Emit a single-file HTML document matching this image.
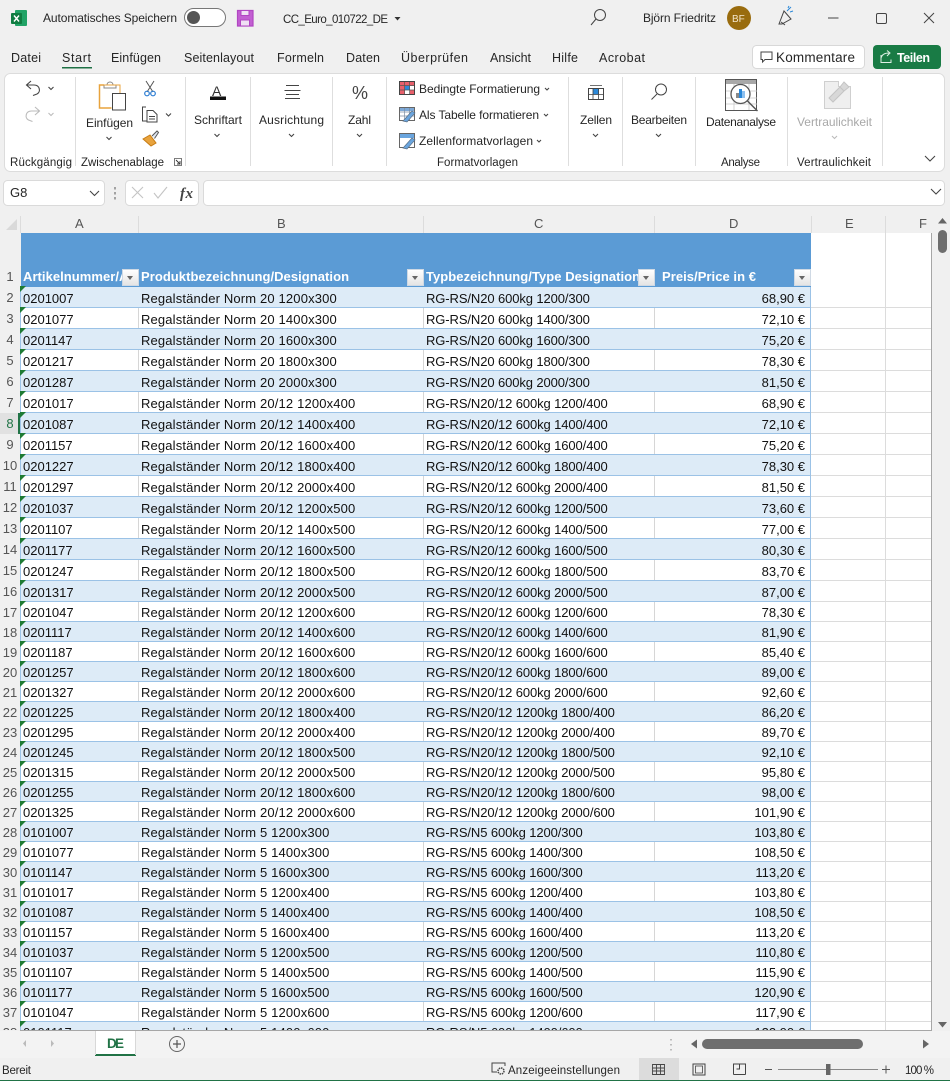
<!DOCTYPE html>
<html lang="de"><head><meta charset="utf-8"><title>CC_Euro_010722_DE</title>
<style>
html,body{margin:0;padding:0;width:950px;height:1081px;overflow:hidden;background:#f0f0f0;font-family:"Liberation Sans",sans-serif}
#g{position:absolute;left:0;top:0;width:931px;height:1030px;overflow:hidden}
#wh{position:absolute;left:21px;top:233px;width:910px;height:797px;background:#fff}
.r{position:absolute;left:0;width:931px;font-size:13px;color:#111;box-shadow:inset 0 -1px 0 #dcdcdc}
.r>em{position:absolute;left:0;top:0;bottom:0;width:20px;background:#f0f0f0;font-style:normal;text-align:center;color:#555;line-height:20px;padding-top:1px;box-sizing:border-box}
.t{position:absolute;left:20px;top:0;bottom:0;width:791px;box-shadow:inset 0 -1px 0 #9BC2E6,inset 1px 0 0 #9BC2E6,inset -1px 0 0 #9BC2E6}
.w{background:linear-gradient(#d6d6d6,#d6d6d6) 118px 0/1px 100% no-repeat,linear-gradient(#d6d6d6,#d6d6d6) 403px 0/1px 100% no-repeat,linear-gradient(#d6d6d6,#d6d6d6) 634px 0/1px 100% no-repeat,#fff}
.z{background:#DDEBF7}
.t span{position:absolute;bottom:-1px;line-height:20px;white-space:nowrap;letter-spacing:.1px}
.a{left:3px;letter-spacing:0!important}.b{left:121px;letter-spacing:.15px!important}.c{left:406px;letter-spacing:-.1px!important}.d{right:6px;letter-spacing:0!important}
.t i{position:absolute;left:0;top:-1px;width:0;height:0;border-top:6px solid #1E7B34;border-right:6px solid transparent}
#hd{position:absolute;left:21px;top:233px;width:790px;height:54px;background:#5B9BD5;color:#fff;font-weight:bold;font-size:13px}
#hd span{position:absolute;top:36px;line-height:16px;white-space:nowrap;letter-spacing:.05px;overflow:hidden}
#hd b{position:absolute;top:36px;width:15px;height:15px;background:linear-gradient(#fff,#e4e4e4);border:.5px solid #cfd9e4}
#hd b:after{content:"";position:absolute;left:4px;top:6px;border-top:4px solid #666;border-left:3.5px solid transparent;border-right:3.5px solid transparent}
#n1{position:absolute;left:0;top:233px;width:20px;height:54px;text-align:center;font-size:13px;color:#555;line-height:16px;padding-top:36px;box-sizing:border-box}
.vl{position:absolute;top:233px;height:797px;width:1px;background:#dcdcdc}
svg{position:absolute;left:0;top:0}
svg text{font-family:"Liberation Sans",sans-serif;fill:#262626;font-size:12px}
.g{fill:none;stroke:#444;stroke-width:1}
.ch{fill:none;stroke:#444;stroke-width:1.1}
</style></head><body>
<div id="g">
<div id="wh"></div>
<div class="vl" style="left:885px"></div>
<div id="n1">1</div>
<div id="hd"><span style="left:2px;width:99px">Artikelnummer/Article</span><b style="left:101px"></b><span style="left:120px">Produktbezeichnung/Designation</span><b style="left:386px"></b><span style="left:405px;width:212px">Typbezeichnung/Type Designation</span><b style="left:617px"></b><span style="left:641px">Preis/Price in €</span><b style="left:773px"></b></div>
<div class="r" style="top:287px;height:21px"><em>2</em><div class="t z"><i></i><span class="a">0201007</span><span class="b">Regalständer Norm 20 1200x300</span><span class="c">RG-RS/N20 600kg 1200/300</span><span class="d">68,90 €</span></div></div>
<div class="r" style="top:308px;height:21px"><em>3</em><div class="t w"><i></i><span class="a">0201077</span><span class="b">Regalständer Norm 20 1400x300</span><span class="c">RG-RS/N20 600kg 1400/300</span><span class="d">72,10 €</span></div></div>
<div class="r" style="top:329px;height:21px"><em>4</em><div class="t z"><i></i><span class="a">0201147</span><span class="b">Regalständer Norm 20 1600x300</span><span class="c">RG-RS/N20 600kg 1600/300</span><span class="d">75,20 €</span></div></div>
<div class="r" style="top:350px;height:21px"><em>5</em><div class="t w"><i></i><span class="a">0201217</span><span class="b">Regalständer Norm 20 1800x300</span><span class="c">RG-RS/N20 600kg 1800/300</span><span class="d">78,30 €</span></div></div>
<div class="r" style="top:371px;height:21px"><em>6</em><div class="t z"><i></i><span class="a">0201287</span><span class="b">Regalständer Norm 20 2000x300</span><span class="c">RG-RS/N20 600kg 2000/300</span><span class="d">81,50 €</span></div></div>
<div class="r" style="top:392px;height:21px"><em>7</em><div class="t w"><i></i><span class="a">0201017</span><span class="b">Regalständer Norm 20/12 1200x400</span><span class="c">RG-RS/N20/12 600kg 1200/400</span><span class="d">68,90 €</span></div></div>
<div class="r" style="top:413px;height:21px"><em style="background:#e1e1e1;color:#217346;box-shadow:inset -2px 0 0 #217346">8</em><div class="t z"><i></i><span class="a">0201087</span><span class="b">Regalständer Norm 20/12 1400x400</span><span class="c">RG-RS/N20/12 600kg 1400/400</span><span class="d">72,10 €</span></div></div>
<div class="r" style="top:434px;height:21px"><em>9</em><div class="t w"><i></i><span class="a">0201157</span><span class="b">Regalständer Norm 20/12 1600x400</span><span class="c">RG-RS/N20/12 600kg 1600/400</span><span class="d">75,20 €</span></div></div>
<div class="r" style="top:455px;height:21px"><em>10</em><div class="t z"><i></i><span class="a">0201227</span><span class="b">Regalständer Norm 20/12 1800x400</span><span class="c">RG-RS/N20/12 600kg 1800/400</span><span class="d">78,30 €</span></div></div>
<div class="r" style="top:476px;height:21px"><em>11</em><div class="t w"><i></i><span class="a">0201297</span><span class="b">Regalständer Norm 20/12 2000x400</span><span class="c">RG-RS/N20/12 600kg 2000/400</span><span class="d">81,50 €</span></div></div>
<div class="r" style="top:497px;height:21px"><em>12</em><div class="t z"><i></i><span class="a">0201037</span><span class="b">Regalständer Norm 20/12 1200x500</span><span class="c">RG-RS/N20/12 600kg 1200/500</span><span class="d">73,60 €</span></div></div>
<div class="r" style="top:518px;height:21px"><em>13</em><div class="t w"><i></i><span class="a">0201107</span><span class="b">Regalständer Norm 20/12 1400x500</span><span class="c">RG-RS/N20/12 600kg 1400/500</span><span class="d">77,00 €</span></div></div>
<div class="r" style="top:539px;height:21px"><em>14</em><div class="t z"><i></i><span class="a">0201177</span><span class="b">Regalständer Norm 20/12 1600x500</span><span class="c">RG-RS/N20/12 600kg 1600/500</span><span class="d">80,30 €</span></div></div>
<div class="r" style="top:560px;height:21px"><em>15</em><div class="t w"><i></i><span class="a">0201247</span><span class="b">Regalständer Norm 20/12 1800x500</span><span class="c">RG-RS/N20/12 600kg 1800/500</span><span class="d">83,70 €</span></div></div>
<div class="r" style="top:581px;height:21px"><em>16</em><div class="t z"><i></i><span class="a">0201317</span><span class="b">Regalständer Norm 20/12 2000x500</span><span class="c">RG-RS/N20/12 600kg 2000/500</span><span class="d">87,00 €</span></div></div>
<div class="r" style="top:602px;height:20px"><em>17</em><div class="t w"><i></i><span class="a">0201047</span><span class="b">Regalständer Norm 20/12 1200x600</span><span class="c">RG-RS/N20/12 600kg 1200/600</span><span class="d">78,30 €</span></div></div>
<div class="r" style="top:622px;height:20px"><em>18</em><div class="t z"><i></i><span class="a">0201117</span><span class="b">Regalständer Norm 20/12 1400x600</span><span class="c">RG-RS/N20/12 600kg 1400/600</span><span class="d">81,90 €</span></div></div>
<div class="r" style="top:642px;height:20px"><em>19</em><div class="t w"><i></i><span class="a">0201187</span><span class="b">Regalständer Norm 20/12 1600x600</span><span class="c">RG-RS/N20/12 600kg 1600/600</span><span class="d">85,40 €</span></div></div>
<div class="r" style="top:662px;height:20px"><em>20</em><div class="t z"><i></i><span class="a">0201257</span><span class="b">Regalständer Norm 20/12 1800x600</span><span class="c">RG-RS/N20/12 600kg 1800/600</span><span class="d">89,00 €</span></div></div>
<div class="r" style="top:682px;height:20px"><em>21</em><div class="t w"><i></i><span class="a">0201327</span><span class="b">Regalständer Norm 20/12 2000x600</span><span class="c">RG-RS/N20/12 600kg 2000/600</span><span class="d">92,60 €</span></div></div>
<div class="r" style="top:702px;height:20px"><em>22</em><div class="t z"><i></i><span class="a">0201225</span><span class="b">Regalständer Norm 20/12 1800x400</span><span class="c">RG-RS/N20/12 1200kg 1800/400</span><span class="d">86,20 €</span></div></div>
<div class="r" style="top:722px;height:20px"><em>23</em><div class="t w"><i></i><span class="a">0201295</span><span class="b">Regalständer Norm 20/12 2000x400</span><span class="c">RG-RS/N20/12 1200kg 2000/400</span><span class="d">89,70 €</span></div></div>
<div class="r" style="top:742px;height:20px"><em>24</em><div class="t z"><i></i><span class="a">0201245</span><span class="b">Regalständer Norm 20/12 1800x500</span><span class="c">RG-RS/N20/12 1200kg 1800/500</span><span class="d">92,10 €</span></div></div>
<div class="r" style="top:762px;height:20px"><em>25</em><div class="t w"><i></i><span class="a">0201315</span><span class="b">Regalständer Norm 20/12 2000x500</span><span class="c">RG-RS/N20/12 1200kg 2000/500</span><span class="d">95,80 €</span></div></div>
<div class="r" style="top:782px;height:20px"><em>26</em><div class="t z"><i></i><span class="a">0201255</span><span class="b">Regalständer Norm 20/12 1800x600</span><span class="c">RG-RS/N20/12 1200kg 1800/600</span><span class="d">98,00 €</span></div></div>
<div class="r" style="top:802px;height:20px"><em>27</em><div class="t w"><i></i><span class="a">0201325</span><span class="b">Regalständer Norm 20/12 2000x600</span><span class="c">RG-RS/N20/12 1200kg 2000/600</span><span class="d">101,90 €</span></div></div>
<div class="r" style="top:822px;height:20px"><em>28</em><div class="t z"><i></i><span class="a">0101007</span><span class="b">Regalständer Norm 5 1200x300</span><span class="c">RG-RS/N5 600kg 1200/300</span><span class="d">103,80 €</span></div></div>
<div class="r" style="top:842px;height:20px"><em>29</em><div class="t w"><i></i><span class="a">0101077</span><span class="b">Regalständer Norm 5 1400x300</span><span class="c">RG-RS/N5 600kg 1400/300</span><span class="d">108,50 €</span></div></div>
<div class="r" style="top:862px;height:20px"><em>30</em><div class="t z"><i></i><span class="a">0101147</span><span class="b">Regalständer Norm 5 1600x300</span><span class="c">RG-RS/N5 600kg 1600/300</span><span class="d">113,20 €</span></div></div>
<div class="r" style="top:882px;height:20px"><em>31</em><div class="t w"><i></i><span class="a">0101017</span><span class="b">Regalständer Norm 5 1200x400</span><span class="c">RG-RS/N5 600kg 1200/400</span><span class="d">103,80 €</span></div></div>
<div class="r" style="top:902px;height:20px"><em>32</em><div class="t z"><i></i><span class="a">0101087</span><span class="b">Regalständer Norm 5 1400x400</span><span class="c">RG-RS/N5 600kg 1400/400</span><span class="d">108,50 €</span></div></div>
<div class="r" style="top:922px;height:20px"><em>33</em><div class="t w"><i></i><span class="a">0101157</span><span class="b">Regalständer Norm 5 1600x400</span><span class="c">RG-RS/N5 600kg 1600/400</span><span class="d">113,20 €</span></div></div>
<div class="r" style="top:942px;height:20px"><em>34</em><div class="t z"><i></i><span class="a">0101037</span><span class="b">Regalständer Norm 5 1200x500</span><span class="c">RG-RS/N5 600kg 1200/500</span><span class="d">110,80 €</span></div></div>
<div class="r" style="top:962px;height:20px"><em>35</em><div class="t w"><i></i><span class="a">0101107</span><span class="b">Regalständer Norm 5 1400x500</span><span class="c">RG-RS/N5 600kg 1400/500</span><span class="d">115,90 €</span></div></div>
<div class="r" style="top:982px;height:20px"><em>36</em><div class="t z"><i></i><span class="a">0101177</span><span class="b">Regalständer Norm 5 1600x500</span><span class="c">RG-RS/N5 600kg 1600/500</span><span class="d">120,90 €</span></div></div>
<div class="r" style="top:1002px;height:20px"><em>37</em><div class="t w"><i></i><span class="a">0101047</span><span class="b">Regalständer Norm 5 1200x600</span><span class="c">RG-RS/N5 600kg 1200/600</span><span class="d">117,90 €</span></div></div>
<div class="r" style="top:1022px;height:20px"><em>38</em><div class="t z"><i></i><span class="a">0101117</span><span class="b">Regalständer Norm 5 1400x600</span><span class="c">RG-RS/N5 600kg 1400/600</span><span class="d">122,90 €</span></div></div>
</div>
<svg width="950" height="1081" viewBox="0 0 950 1081">
<!-- title bar -->
<rect x="15" y="10" width="12" height="16" rx="1" fill="#21a366"/><rect x="11" y="13" width="11" height="11" rx="1" fill="#107c41"/><path d="M14 15.500l5 6M19 15.500l-5 6" stroke="#fff" stroke-width="1.400"/>
<text x="43" y="22" textLength="134">Automatisches Speichern</text>
<rect x="184.500" y="8.500" width="41" height="18" rx="9" fill="#fff" stroke="#777"/><circle cx="193.500" cy="17.500" r="6.500" fill="#555"/>
<path d="M237.500 10.500h15.500v15.500h-15.500z" fill="#c25fd2" stroke="#b146c2" stroke-width="1.200"/><rect x="241" y="10.500" width="8" height="5" fill="#f0e0f4" stroke="#b146c2"/><rect x="240.500" y="20" width="9" height="6" fill="#f0e0f4" stroke="#b146c2"/>
<text x="283" y="23" textLength="105" style="font-size:11.500px">CC_Euro_010722_DE</text><path d="M394.500 17h6l-3 3.500z" fill="#333"/>
<circle cx="600" cy="15" r="5.500" class="g"/><path d="M596 19l-5 6" class="g"/>
<text x="643" y="22" textLength="73">Björn Friedritz</text>
<circle cx="739" cy="18" r="12" fill="#996c0e"/><text x="732" y="22" style="font-size:10px;fill:#f3e6cb">BF</text>
<path d="M779 24l5-13 7 8-9 5zM781 22l4 3" class="g"/><path d="M787 11l4-4M790 12l3-1M788 8l1-2" stroke="#2b88d8" stroke-width="1" fill="none"/>
<path d="M828 18h10.500" class="g"/><rect x="876.500" y="13.500" width="10" height="10" rx="1.500" class="g"/><path d="M924 13l10 10M934 13l-10 10" class="g"/>
<!-- tabs -->
<text x="11" y="62" textLength="30" style="font-size:12.500px">Datei</text>
<text x="62" y="62" textLength="29" style="font-size:12.500px">Start</text>
<text x="111" y="62" textLength="50" style="font-size:12.500px">Einfügen</text>
<text x="184" y="62" textLength="70" style="font-size:12.500px">Seitenlayout</text>
<text x="277" y="62" textLength="47" style="font-size:12.500px">Formeln</text>
<text x="346" y="62" textLength="34" style="font-size:12.500px">Daten</text>
<text x="401" y="62" textLength="67" style="font-size:12.500px">Überprüfen</text>
<text x="490" y="62" textLength="41" style="font-size:12.500px">Ansicht</text>
<text x="552" y="62" textLength="26" style="font-size:12.500px">Hilfe</text>
<text x="599" y="62" textLength="46" style="font-size:12.500px">Acrobat</text>
<rect x="62" y="67" width="30" height="1.500" fill="#1e7145"/>
<rect x="752.500" y="45.500" width="112" height="23" rx="4" fill="#fff" stroke="#d8d8d8"/>
<path d="M761 52h11v7.500h-7l-2.500 2.500v-2.500h-1.500z" class="g"/>
<text x="776" y="62" textLength="79" style="font-size:13.500px">Kommentare</text>
<rect x="873" y="45" width="68" height="24" rx="4" fill="#197b45"/>
<path d="M881 55v7.500h10v-3M881 58c1-4 4-5 8-5M887 50.500l3 2.500-3 3" fill="none" stroke="#dff0e6"/>
<text x="897" y="62" textLength="33" style="font-size:12.500px;font-weight:bold;fill:#fff">Teilen</text>
<!-- ribbon panel -->
<rect x="4.500" y="73.500" width="940" height="98" rx="6" fill="#fff" stroke="#dcdcdc"/>
<path d="M75.500 77v89M185.500 77v89M250.500 77v89M332.500 77v89M386.500 77v89M568.500 77v89M622.500 77v89M695.500 77v89M787.500 77v89M882.500 77v89" stroke="#dedede"/>
<!-- undo / redo -->
<path d="M31 81l-4.500 4 4.500 4M27 85h7c6 0 7 7 3 9l-4 1.500" fill="none" stroke="#444" stroke-width="1.100"/>
<path d="M35 107l4.500 4-4.500 4M39.500 111h-8c-6 0-7 7-3 9l4 1.500" fill="none" stroke="#bbb" stroke-width="1.100"/>
<path d="M48.500 87l2.500 2.500 2.500-2.500" class="ch"/><path d="M48.500 113l2.500 2.500 2.500-2.500" class="ch" style="stroke:#bbb"/>
<!-- paste -->
<path d="M104 85h-4.500v23h12" fill="#fff" stroke="#e8a33d" stroke-width="1.500"/><path d="M104 88v-3h3c0-4 6-4 6 0h3v3z" fill="#fff" stroke="#888"/><path d="M99 85h21v8" fill="none" stroke="#e8a33d" stroke-width="1"/>
<rect x="112.500" y="93.500" width="13" height="16.500" fill="#fff" stroke="#444"/>
<text x="86" y="127" textLength="47">Einfügen</text><path d="M106.500 137l2.500 2.500 2.500-2.500" class="ch"/>
<!-- scissors -->
<path d="M146 81l7 11M154 81l-7 11" stroke="#555" fill="none"/><circle cx="147" cy="93.500" r="2.300" fill="none" stroke="#2b7cd3" stroke-width="1.200"/><circle cx="153" cy="93.500" r="2.300" fill="none" stroke="#2b7cd3" stroke-width="1.200"/>
<!-- copy -->
<path d="M146 107h-3.500v14h4M147 110.500h6l4 4v7.500h-10zM149 116.500h6M149 119h6" fill="none" stroke="#444"/>
<path d="M166 113.500l2.500 2.500 2.500-2.500" class="ch"/>
<!-- painter -->
<path d="M143 139l7-4 6 8-5 3z" fill="#e8a33d" stroke="#c77c14"/><path d="M152 136l5-5 1.500 1.500-4 6" fill="#dfe7f2" stroke="#555"/>
<!-- font -->
<text x="212" y="96" style="font-size:14px;fill:#333">A</text><rect x="210" y="96.500" width="16" height="3.500" fill="#111"/>
<text x="194" y="124" textLength="48">Schriftart</text><path d="M214.500 134l2.500 2.500 2.500-2.500" class="ch"/>
<!-- align -->
<path d="M286 85.500h13M284.500 90.500h16M286 94.500h13M285 98.500h15" stroke="#444" fill="none"/>
<text x="259" y="124" textLength="65">Ausrichtung</text><path d="M289 134l2.500 2.500 2.500-2.500" class="ch"/>
<!-- number -->
<text x="352" y="99" textLength="16" lengthAdjust="spacingAndGlyphs" style="font-size:18px;fill:#444">%</text>
<text x="348" y="124" textLength="23">Zahl</text><path d="M357 134l2.500 2.500 2.500-2.500" class="ch"/>
<!-- styles -->
<rect x="399.500" y="81.500" width="15" height="13" fill="#fff" stroke="#444"/><rect x="400" y="82" width="14" height="4" fill="#e8606b"/><rect x="400" y="86" width="5" height="8" fill="#e8606b"/><rect x="405" y="86" width="5" height="4" fill="#2b88d8"/><rect x="410" y="90" width="4" height="4" fill="#e8606b"/><path d="M404.500 82v12M409.500 82v12M400 85.500h14M400 90h14" stroke="#555" stroke-width=".7"/>
<text x="419" y="93" textLength="121">Bedingte Formatierung</text><path d="M545 88l2 2 2-2" class="ch"/>
<rect x="399.500" y="107.500" width="15" height="13" fill="#fff" stroke="#666"/><rect x="400" y="108" width="14" height="3" fill="#7da9d8"/><path d="M404.500 108v12M409.500 108v12M400 112h14M400 116h14" stroke="#7b8ea3" stroke-width=".7"/><path d="M403 121l9-10 3 2-8 9z" fill="#6aa5de" stroke="#5a6f85" stroke-width=".7"/>
<text x="419" y="119" textLength="120">Als Tabelle formatieren</text><path d="M544 114l2 2 2-2" class="ch"/>
<rect x="399.500" y="133.500" width="15" height="14" fill="#fff" stroke="#666"/><rect x="400" y="134" width="14" height="4" fill="#6aa5de"/><path d="M403 148l9-10 3 2-8 9z" fill="#6aa5de" stroke="#5a6f85" stroke-width=".7"/>
<text x="419" y="145" textLength="114">Zellenformatvorlagen</text><path d="M537 140l2 2 2-2" class="ch"/>
<text x="437" y="166" textLength="81" style="font-size:11.500px">Formatvorlagen</text>
<!-- cells -->
<rect x="588.500" y="88.500" width="15" height="11" fill="#fff" stroke="#444"/><rect x="593" y="89" width="6" height="5.500" fill="#2b88d8"/><path d="M588.500 94.500h15M593 89v10M598.500 89v10M590 85.500h12" stroke="#444" stroke-width=".8" fill="none"/>
<text x="580" y="124" textLength="32">Zellen</text><path d="M593 134l2.500 2.500 2.500-2.500" class="ch"/>
<!-- edit -->
<circle cx="661" cy="89.500" r="5.500" class="g"/><path d="M657 94l-5.500 5.500" class="g"/>
<text x="631" y="124" textLength="56">Bearbeiten</text><path d="M656 134l2.500 2.500 2.500-2.500" class="ch"/>
<!-- data analysis -->
<rect x="725.500" y="79.500" width="31" height="31" fill="#fff" stroke="#555"/><rect x="726" y="80" width="30" height="4" fill="#a8a8a8"/>
<path d="M726 91h31M726 98h31M726 104h31M734 84v26M749 84v26" stroke="#c8c8c8" stroke-width=".8"/>
<circle cx="740.500" cy="94" r="9.500" fill="#fff" stroke="#555" stroke-width="1.300"/><path d="M747.500 101l10 10" stroke="#555" stroke-width="1.500"/>
<rect x="736" y="93" width="3" height="5" fill="#8a8a8a"/><rect x="739" y="89" width="3" height="9" fill="#2b88d8"/><rect x="742" y="91" width="3" height="7" fill="#8fc1ef"/>
<text x="706" y="126" textLength="70">Datenanalyse</text>
<text x="721" y="166" textLength="39" style="font-size:11.500px">Analyse</text>
<!-- sensitivity -->
<path d="M824.500 81.500h14v5l12 0v22h-26z" fill="#efefef" stroke="#cfcfcf"/>
<path d="M829 98l11-11 4 4-11 11zM840 87l4-5 5 5-5 4" fill="#d8d8d8" stroke="#c4c4c4"/>
<text x="797" y="126" textLength="75" style="fill:#a8a8a8">Vertraulichkeit</text><path d="M832 136l2.500 2.500 2.500-2.500" class="ch" style="stroke:#bbb"/>
<text x="797" y="166" textLength="74" style="font-size:11.500px">Vertraulichkeit</text>
<path d="M925 156l5 5 5-5" class="ch" style="stroke:#444"/>
<text x="10" y="166" textLength="62" style="font-size:11.500px">Rückgängig</text>
<text x="81" y="166" textLength="83" style="font-size:11.500px">Zwischenablage</text>
<path d="M174.500 158.500h7v7h-7z" fill="none" stroke="#555" stroke-width=".8"/><path d="M176 160l4 4M180 161v3h-3" fill="none" stroke="#333" stroke-width=".9"/>
<!-- formula bar -->
<rect x="3.500" y="180.500" width="101" height="25" rx="4" fill="#fff" stroke="#dadada"/>
<text x="10" y="197" style="font-size:13px">G8</text>
<path d="M90 191l4.500 4.500 4.500-4.500" class="ch" style="stroke:#444"/>
<path d="M115 187v2.500M115 192v2.500M115 197v2.500" stroke="#888" stroke-width="1.500"/>
<rect x="125.500" y="180.500" width="73" height="25" rx="4" fill="#fff" stroke="#dadada"/>
<path d="M132 187l11 11M143 187l-11 11" stroke="#c4c4c4" stroke-width="1.100"/><path d="M154 193l4 5 9-11" stroke="#c4c4c4" stroke-width="1.100" fill="none"/>
<text x="180" y="198" textLength="13" style="font-family:'Liberation Serif',serif;font-style:italic;font-size:15px;font-weight:bold;fill:#444">fx</text>
<rect x="203.500" y="180.500" width="741" height="25" rx="4" fill="#fff" stroke="#dadada"/>
<path d="M931 189l5 5 5-5" class="ch" style="stroke:#444"/>
<!-- column headers -->
<path d="M6 230h11v-11z" fill="#d9d9d9"/>
<path d="M20.500 216v17M138.500 216v17M423.500 216v17M654.500 216v17M811.500 216v17M885.500 216v17" stroke="#dcdcdc"/>
<text x="75" y="228" style="font-size:13px;fill:#555">A</text>
<text x="277" y="228" style="font-size:13px;fill:#555">B</text>
<text x="534" y="228" style="font-size:13px;fill:#555">C</text>
<text x="729" y="228" style="font-size:13px;fill:#555">D</text>
<text x="845" y="228" style="font-size:13px;fill:#555">E</text>
<text x="919" y="228" style="font-size:13px;fill:#555">F</text>
<path d="M931.500 233v797.500H20" fill="none" stroke="#a6a6a6"/>
<!-- vertical scroll -->
<path d="M938 223.500l4.500-5.500 4.500 5.500z" fill="#666"/>
<rect x="938" y="230" width="9" height="23" rx="4.500" fill="#6e6e6e"/>
<path d="M938 1022l4.500 5.500 4.500-5.500z" fill="#666"/>
<!-- sheet bar -->
<rect x="0" y="1031" width="950" height="27" fill="#f3f3f3"/>
<path d="M26 1040v7l-3-3.500zM51 1040v7l3-3.500z" fill="#bbb"/>
<rect x="95" y="1031" width="40" height="25" fill="#fff"/><rect x="95" y="1054" width="41" height="2" fill="#217346"/>
<path d="M95.500 1031v24M135.500 1031v24" stroke="#d8d8d8"/>
<text x="107" y="1048" textLength="17" style="font-size:13.500px;font-weight:bold;fill:#217346">DE</text>
<circle cx="177" cy="1044" r="7.500" fill="none" stroke="#666"/><path d="M173 1044h8M177 1040v8" stroke="#555" stroke-width="1.200"/>
<path d="M671 1039v1.500M671 1044v1.500M671 1049v1.500" stroke="#aaa" stroke-width="1.500"/>
<path d="M697 1039.500v9l-6-4.500z" fill="#666"/>
<rect x="702" y="1039" width="161" height="10" rx="5" fill="#6e6e6e"/>
<path d="M923 1039.500v9l6-4.500z" fill="#666"/>
<!-- status bar -->
<rect x="0" y="1058" width="950" height="22" fill="#f0f0f0"/><rect x="0" y="1080" width="950" height="1" fill="#217346"/>
<text x="2" y="1074" textLength="29" style="font-size:11.500px">Bereit</text>
<path d="M497 1072h-5v-9h13v3" fill="none" stroke="#444"/><circle cx="501" cy="1071" r="3" fill="none" stroke="#444" stroke-width="1.500" stroke-dasharray="1.500 .8"/>
<text x="508" y="1074" textLength="112" style="font-size:11.500px">Anzeigeeinstellungen</text>
<rect x="639" y="1058" width="40" height="22" fill="#dcdcdc"/>
<path d="M652.500 1064.500h12v10h-12zM652.500 1068h12M652.500 1071h12M656.500 1064.500v10M660.500 1064.500v10" fill="none" stroke="#444" stroke-width=".9"/>
<rect x="693" y="1064" width="12" height="11" fill="none" stroke="#444"/><rect x="695.500" y="1066" width="7" height="7" fill="none" stroke="#444" stroke-width=".8"/>
<path d="M733.500 1074.500v-10.500h12v10.500M733.500 1074.500h12M739.500 1064v5h-3" fill="none" stroke="#444"/>
<path d="M765 1069.500h7" stroke="#555"/>
<rect x="778" y="1069" width="100" height="1" fill="#888"/>
<rect x="826" y="1064" width="4.500" height="11" fill="#666"/>
<path d="M882 1069.500h8M886 1065.500v8" stroke="#555"/>
<text x="905" y="1074" textLength="29" style="font-size:11.500px">100 %</text>
</svg>
</body></html>
